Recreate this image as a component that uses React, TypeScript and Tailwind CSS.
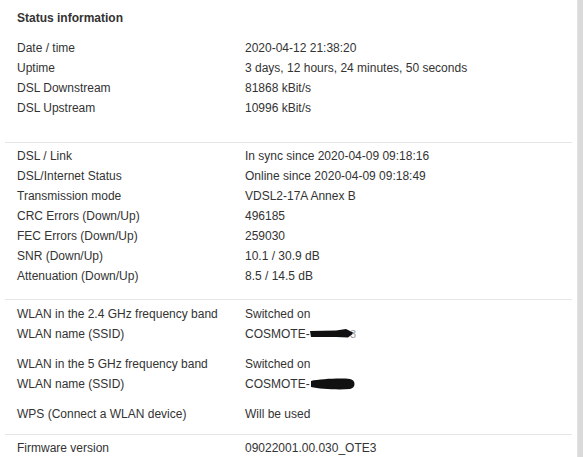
import React from "react";

type Row = { label: string; value: React.ReactNode };

function Blob1() {
  return (
    <svg width="46" height="10" viewBox="0 0 46 10" className="inline-block align-[-1px]">
      <path d="M0 2 L26 1.5 L36 0 L44 4 L38 8.5 L26 8 L1 8 Z" fill="#111" />
      <text x="40" y="9" fontSize="11" fill="#9a9a9a" fontFamily="Liberation Sans, Arial, sans-serif">3</text>
    </svg>
  );
}

function Blob2() {
  return (
    <svg width="46" height="12" viewBox="0 0 46 12" className="inline-block align-[-2px]">
      <path d="M1 3 C10 1 30 0 40 1 C46 2 46 10 40 11 C28 12 10 11 1 9 Z" fill="#111" />
    </svg>
  );
}

function Line({ label, value }: Row) {
  return (
    <div className="flex h-5 items-center leading-5">
      <div className="w-[228px] shrink-0">{label}</div>
      <div>{value}</div>
    </div>
  );
}

function Sep() {
  return <div className="ml-[5px] mr-[5px] h-px bg-[#e6e6e6]" />;
}

export default function App() {
  const basic: Row[] = [
    { label: "Date / time", value: "2020-04-12 21:38:20" },
    { label: "Uptime", value: "3 days, 12 hours, 24 minutes, 50 seconds" },
    { label: "DSL Downstream", value: "81868 kBit/s" },
    { label: "DSL Upstream", value: "10996 kBit/s" },
  ];
  const dsl: Row[] = [
    { label: "DSL / Link", value: "In sync since 2020-04-09 09:18:16" },
    { label: "DSL/Internet Status", value: "Online since 2020-04-09 09:18:49" },
    { label: "Transmission mode", value: "VDSL2-17A Annex B" },
    { label: "CRC Errors (Down/Up)", value: "496185" },
    { label: "FEC Errors (Down/Up)", value: "259030" },
    { label: "SNR (Down/Up)", value: "10.1 / 30.9 dB" },
    { label: "Attenuation (Down/Up)", value: "8.5 / 14.5 dB" },
  ];

  return (
    <div
      className="flex h-[457px] w-[583px] overflow-hidden bg-[#dadada] text-[12px] text-[#333]"
      style={{ fontFamily: '"Liberation Sans", Arial, sans-serif' }}
    >
      <div className="w-[578px] shrink-0 border-r border-[#e4e4e4] bg-white">
        <div className="pl-[17px] pt-2">
          <div className="h-5 font-bold leading-5">Status information</div>
          <div className="mt-[10px]">
            {basic.map((r) => (
              <Line key={r.label} {...r} />
            ))}
          </div>
        </div>
        <div className="mt-[24px]">
          <Sep />
        </div>
        <div className="mt-[3px] pl-[17px]">
          {dsl.map((r) => (
            <Line key={r.label} {...r} />
          ))}
        </div>
        <div className="mt-[13px]">
          <Sep />
        </div>
        <div className="mt-[4px] pl-[17px]">
          <Line label="WLAN in the 2.4 GHz frequency band" value="Switched on" />
          <Line
            label="WLAN name (SSID)"
            value={
              <span className="inline-flex items-center">
                COSMOTE-
                <Blob1 />
              </span>
            }
          />
          <div className="mt-[10px]">
            <Line label="WLAN in the 5 GHz frequency band" value="Switched on" />
            <Line
              label="WLAN name (SSID)"
              value={
                <span className="inline-flex items-center">
                  COSMOTE-
                  <Blob2 />
                </span>
              }
            />
          </div>
          <div className="mt-[10px]">
            <Line label="WPS (Connect a WLAN device)" value="Will be used" />
          </div>
        </div>
        <div className="mt-[10px]">
          <Sep />
        </div>
        <div className="mt-[3px] pl-[17px]">
          <Line label="Firmware version" value="09022001.00.030_OTE3" />
        </div>
      </div>
    </div>
  );
}
